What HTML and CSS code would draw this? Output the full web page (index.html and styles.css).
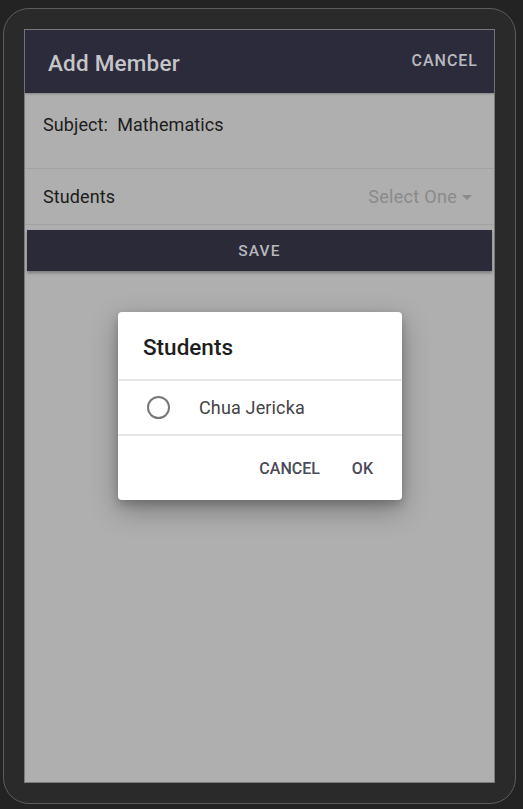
FILE: index.html
```html
<!DOCTYPE html>
<html>
<head>
<meta charset="utf-8">
<link rel="stylesheet" href="styles.css">
</head>
<body>
<div class="device">
  <div class="screen">
    <header class="appbar">
      <h1 class="title">Add Member</h1>
      <span class="action">CANCEL</span>
    </header>
    <div class="row subject">
      <span>Subject:&nbsp; Mathematics</span>
    </div>
    <div class="row students">
      <span>Students</span>
      <span class="select">Select One <span class="caret"></span></span>
    </div>
    <button class="save">SAVE</button>

    <div class="dialog">
      <div class="dialog-title">Students</div>
      <div class="dialog-item">
        <span class="radio"></span>
        <span class="item-label">Chua Jericka</span>
      </div>
      <div class="dialog-actions">
        <span class="btn">CANCEL</span>
        <span class="btn">OK</span>
      </div>
    </div>
  </div>
</div>
</body>
</html>
```
FILE: styles.css
```css
* { box-sizing: border-box; }
html, body { margin: 0; padding: 0; }
body {
  background: #232323;
  width: 523px;
  height: 809px;
  font-family: Roboto, "Noto Sans", sans-serif;
  overflow: hidden;
}
.device {
  margin: 8px 0 0 3px;
  width: 513px;
  height: 796px;
  background: #2a2a2a;
  border: 1px solid #5c5c5c;
  border-radius: 26px;
  padding: 20px 0 0 20px;
}
.screen {
  position: relative;
  width: 471px;
  height: 754px;
  background: #afafaf;
  border: 1px solid #7a7a7a;
  display: flex;
  flex-direction: column;
}
.appbar {
  height: 63px;
  background: #2b2b3b;
  display: flex;
  align-items: center;
  justify-content: space-between;
  padding: 0 16px 0 23px;
  box-shadow: 0 1px 2px rgba(0,0,0,0.25);
}
.title {
  margin: 0;
  font-size: 22.5px;
  font-weight: 500;
  letter-spacing: 0.2px;
  color: #c5c5c9;
  padding-top: 2px;
}
.action {
  font-size: 16px;
  font-weight: 500;
  letter-spacing: 1px;
  color: #b9b9bf;
  padding-bottom: 2px;
}
.row {
  display: flex;
  justify-content: space-between;
  align-items: center;
  padding: 0 22px 0 18px;
  font-size: 18px;
  letter-spacing: 0.1px;
  color: #1c1c1c;
  border-bottom: 1px solid #a2a2a2;
}
.subject {
  height: 76px;
  align-items: flex-start;
  padding-top: 21px;
}
.students {
  height: 56px;
}
.select {
  color: #8a8a8a;
  display: flex;
  align-items: center;
  letter-spacing: 0.3px;
}
.caret {
  display: inline-block;
  width: 0; height: 0;
  margin-left: 5px;
  margin-top: 2px;
  border-left: 5px solid transparent;
  border-right: 5px solid transparent;
  border-top: 5px solid #8a8a8a;
}
.save {
  margin: 5px 2px 0 2px;
  height: 41px;
  border: none;
  background: #2a2a38;
  color: #b7b7bd;
  font-family: Roboto, sans-serif;
  font-size: 15.5px;
  font-weight: 500;
  letter-spacing: 1.2px;
  box-shadow: 0 2px 3px rgba(0,0,0,0.3);
  padding: 0;
}
.dialog {
  position: absolute;
  left: 93px;
  top: 282px;
  width: 284px;
  height: 188px;
  background: #fff;
  border-radius: 4px;
  box-shadow: 0 10px 28px rgba(0,0,0,0.3), 0 4px 10px rgba(0,0,0,0.2);
  display: flex;
  flex-direction: column;
}
.dialog-title {
  height: 69px;
  padding: 22px 0 0 25px;
  font-size: 22.5px;
  font-weight: 500;
  color: #1e1e1e;
  border-bottom: 2px solid #e6e6e6;
}
.dialog-item {
  height: 55px;
  display: flex;
  align-items: center;
  padding-left: 29px;
  border-bottom: 2px solid #e6e6e6;
}
.radio {
  width: 23px;
  height: 23px;
  border: 2px solid #777;
  border-radius: 50%;
}
.item-label {
  margin-left: 29px;
  font-size: 18px;
  letter-spacing: 0.15px;
  color: #444;
}
.dialog-actions {
  flex: 1;
  display: flex;
  justify-content: flex-end;
  align-items: center;
  gap: 32px;
  padding-right: 29px;
}
.btn {
  font-size: 16px;
  font-weight: 500;
  color: #4a4a58;
}
```
